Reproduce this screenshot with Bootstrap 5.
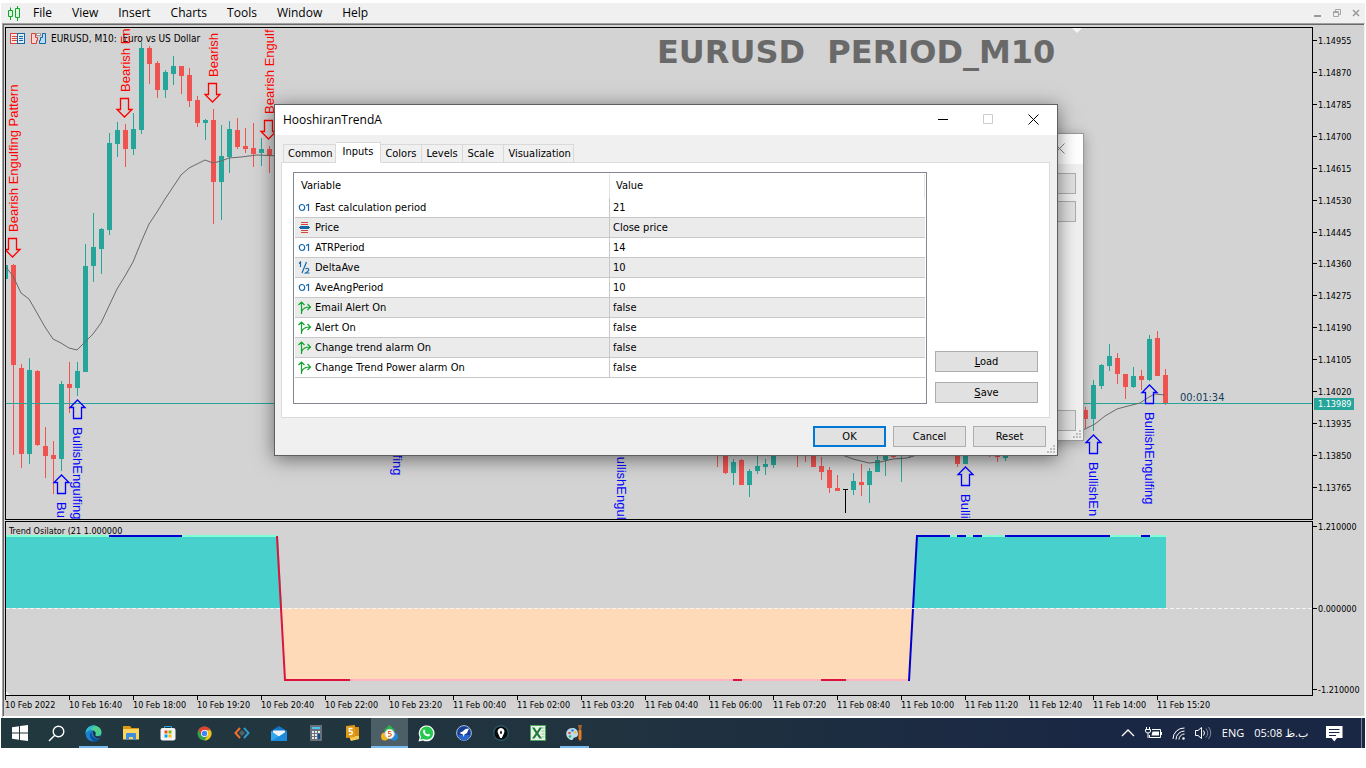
<!DOCTYPE html>
<html lang="en">
<head>
  <meta charset="UTF-8">
  <meta name="viewport" content="width=device-width, initial-scale=1.0">
  <title>EURUSD, M10</title>
  <link rel="stylesheet" href="https://cdn.jsdelivr.net/npm/bootstrap@5.3.0/dist/css/bootstrap.min.css">
  <style>
    body { background: #fff; color: #000; font: 12px/16px "Open Sans", "Noto Sans", sans-serif; padding: 3px 1px 0; }
    svg { display: block; flex: none; }
    button { font: inherit; color: inherit; border: 0; background: none; padding: 0; }

    .menubar { height: 20px; background: #f0f0f0; padding-left: 7px; padding-right: 4px; }
    .menubar .menus { gap: 20px; margin-left: 12px; }
    .wincontrols { gap: 9px; }

    .workspace { background: #d3d3d3; border: solid #a0a0a0; border-width: 1px 0 0 1px; border-right: 1px solid #f0f0f0; border-bottom: 2px solid #fff; margin-left: 1px; }
    .workspace-inner { border: solid #696969; border-width: 1px 0 0 1px; padding: 2px 0 0 1px; }
    .chart-text { font: 9px/12px "DejaVu Sans Condensed", "DejaVu Sans", sans-serif; }
    .chart-title { font-size: 10px; }
    .chart-row { margin-bottom: 1px; }
    .pane { border: 1px solid #000; min-width: 0; overflow: hidden; }
    .pane svg { width: 100%; }
    .price-pane { height: 493px; }
    .osc-pane { height: 175px; }
    .axis { width: 51px; flex: none; }
    .price-axis { padding: 8px 0 26px; }
    .axis-label { padding-left: 5px; position: relative; }
    .axis-label::before { content: ""; position: absolute; left: 0; top: 5px; width: 4px; height: 1px; background: #000; }
    .price-tag { position: absolute; left: 1px; top: 371px; width: 40px; padding-left: 4px; background: #26a69a; color: #fff; }
    .time-axis { height: 20px; }
    .time-axis div { width: 64px; flex: none; position: relative; padding-top: 3px; white-space: nowrap; }
    .time-axis div::before { content: ""; position: absolute; left: 0; top: 0; width: 1px; height: 4px; background: #000; }
    .pattern { font: 13px "Liberation Sans", Arial, sans-serif; }
    .watermark { font: 700 32px "DejaVu Sans", sans-serif; fill: #696969; }
    .countdown { font-size: 11px; fill: #11405e; }

    .win { position: absolute; background: #f0f0f0; font: 11px/14px "DejaVu Sans Condensed", "DejaVu Sans", sans-serif; }
    .win-back { left: 740px; top: 133px; width: 344px; height: 308px; border: 1px solid #999; box-shadow: 0 2px 12px rgba(0,0,0,.3); }
    .win-front { left: 274px; top: 104px; width: 784px; height: 352px; border: 1px solid #5f5f5f; box-shadow: 0 3px 18px rgba(0,0,0,.5); }
    .win-title { height: 30px; background: #fff; font: 12px/16px "Open Sans", "Noto Sans", sans-serif; padding-right: 1px; }
    .win-title button { width: 45px; height: 28px; display: flex; align-items: center; justify-content: center; align-self: flex-start; }
    .btn-win { height: 21px; width: 73px; background: #e1e1e1; border: 1px solid #adadad; }
    .btn-win.wide { width: 103px; }
    .btn-win.default { border: 2px solid #0078d7; }
    .grip { position: absolute; right: 1px; bottom: 1px; }
    .back-top { padding: 9px 7px 0; gap: 7px; }
    .back-bottom { position: absolute; right: 7px; bottom: 9px; }

    .dlg-tabs { margin: 7px 0 0 8px; height: 21px; align-items: flex-end; flex-wrap: nowrap; }
    .dlg-tabs button { height: 19px; min-width: 41px; text-align: left; border: 1px solid #d9d9d9; border-left-width: 0; padding: 0 2px 0 4px; }
    .dlg-tabs .nav-item:first-child button { border-left-width: 1px; }
    .dlg-tabs button.active { height: 21px; background: #fff; border-bottom-color: #fff; padding: 0 7px 2px; }
    .tab-page { background: #fff; border: 1px solid #dcdcdc; height: 256px; margin: -1px 7px 0 6px; padding: 9px 11px 0; }
    .list-frame { border: 1px solid #828790; height: 232px; padding: 1px; }
    .inputs { width: 100%; table-layout: fixed; border-collapse: separate; border-spacing: 0; }
    .inputs th { height: 24px; font-weight: 400; padding: 0 6px; border-right: 1px solid #e5e5e5; }
    .inputs td { height: 20px; padding: 1px 3px 0; border-bottom: 1px solid #c8c8c8; }
    .inputs td:first-child { border-right: 1px solid #c8c8c8; }
    .inputs tbody tr:nth-child(even) td { background: #ebebeb; }
    .inputs col:first-child { width: 50%; }
    .inputs td svg { margin-right: 3px; }
    .side-buttons { gap: 10px; padding-bottom: 14px; }
    .dlg-footer { gap: 7px; padding: 8px 11px 0; }

    .taskbar { height: 30px; background: linear-gradient(90deg, #22383f, #20333f 45%, #1a2744 80%); color: #fff; }
    .taskbar .app { width: 37px; height: 30px; display: flex; align-items: center; justify-content: center; position: relative; }
    .taskbar .app.running::after { content: ""; position: absolute; left: 4px; right: 4px; bottom: 0; height: 2px; background: #76b9ed; }
    .taskbar .app.current { background: #4c5f66; }
    .taskbar .app.current::after { left: 0; right: 0; }
    .tray { gap: 10px; padding-right: 3px; font-size: 11px; }
    .show-desktop { width: 1px; height: 30px; background: #76808f; margin-left: 8px; }
  </style>
</head>
<body>
  <nav class="menubar d-flex align-items-center">
    <svg width="13" height="15" viewBox="0 0 13 15" fill="#dff5df" stroke="#0caa26"><path d="M2.500 1.500v3M2.500 11v3M9.500 0v2M9.500 12v3" /><path d="M.5 4.500h4v6h-4zM7.500 2.500h4v9h-4z" /></svg>
    <div class="menus d-flex flex-grow-1">
      <button type="button">File</button>
      <button type="button">View</button>
      <button type="button">Insert</button>
      <button type="button">Charts</button>
      <button type="button">Tools</button>
      <button type="button">Window</button>
      <button type="button">Help</button>
    </div>
    <div class="wincontrols d-flex">
      <button type="button" aria-label="Minimize"><svg width="10" height="10" stroke="#999" stroke-width="2"><path d="M1 8h7" /></svg></button>
      <button type="button" aria-label="Restore"><svg width="10" height="10" fill="none" stroke="#a5a5a5"><path d="M3.500 3V1.500h5v5H7M1.500 3.500h5v5h-5zM1.500 4.500h5" /></svg></button>
      <button type="button" aria-label="Close"><svg width="10" height="10" stroke="#999" stroke-width="1.500"><path d="M2 2l6 6M8 2l-6 6" /></svg></button>
    </div>
  </nav>

  <main class="workspace">
    <div class="workspace-inner chart-text">
      <div class="chart-row d-flex">
        <div class="pane price-pane flex-grow-1">
          <svg height="491">
            <g transform="translate(-6 -28)">
              <path d="M1072 28h10l-5 5z" fill="#f5f5f5" />
              <text class="watermark" x="657" y="63">EURUSD&nbsp;&nbsp;PERIOD_M10</text>
              <g fill="#fff">
                <rect x="10.500" y="33.500" width="7" height="10" fill="#fde8e4" stroke="#d8433b" />
                <rect x="17.500" y="33.500" width="7" height="10" fill="#dcecfa" stroke="#1767a8" />
                <path d="M12 36.500h5M12 38.500h5M12 40.500h5" stroke="#d8433b" />
                <path d="M19 36.500h4M19 38.500h4M19 40.500h4" stroke="#1767a8" />
                <path d="M31.500 33.500h4v4h2v3h-1v3h-5z" fill="#fbd5cf" stroke="#d8433b" />
                <path d="M42.500 33.500h3v10h-6v-3h1v-3h2z" fill="#b9dcf7" stroke="#1767a8" />
                <rect x="36.500" y="33.500" width="4" height="2" stroke="#999" />
              </g>
              <text class="chart-title" x="51" y="42">EURUSD, M10:&nbsp; Euro vs US Dollar</text>
              <g id="candles" shape-rendering="crispEdges"></g>
              <path d="M6 403.500H1320" stroke="#26a69a" shape-rendering="crispEdges" />
              <g id="average" fill="none" stroke="#696969"></g>
              <g id="patterns" class="pattern"></g>
              <text class="countdown" x="1180" y="401">00:01:34</text>
            </g>
          </svg>
        </div>
        <div class="axis price-axis position-relative d-flex flex-column justify-content-between">
          <div class="axis-label">1.14955</div>
          <div class="axis-label">1.14870</div>
          <div class="axis-label">1.14785</div>
          <div class="axis-label">1.14700</div>
          <div class="axis-label">1.14615</div>
          <div class="axis-label">1.14530</div>
          <div class="axis-label">1.14445</div>
          <div class="axis-label">1.14360</div>
          <div class="axis-label">1.14275</div>
          <div class="axis-label">1.14190</div>
          <div class="axis-label">1.14105</div>
          <div class="axis-label">1.14020</div>
          <div class="axis-label">1.13935</div>
          <div class="axis-label">1.13850</div>
          <div class="axis-label">1.13765</div>
          <div class="price-tag">1.13989</div>
        </div>
      </div>

      <div class="d-flex">
        <div class="pane osc-pane flex-grow-1">
          <svg height="173">
            <g transform="translate(-6 -522)">
              <path d="M6 536H278L282 608H6zM917 536H1166V608H913z" fill="#48d1cc" />
              <path d="M282 608H913L909 680H285z" fill="#ffdab9" />
              <g fill="none" stroke-width="2">
                <path d="M6 536H278M917 536H1166" stroke="#7fffd4" />
                <path d="M285 680H909" stroke="#ffb6c1" />
                <path d="M277 536L285 680H350M733 680H742M821 680H846" stroke="#dc143c" />
                <path d="M109 536H182M909 681L917 536H950M957 536H966M973 536H982M1005 536H1110M1141 536H1150" stroke="#0000cd" />
              </g>
              <path d="M6 608.500H1320" stroke="#f5f5f5" stroke-dasharray="4 2" />
              <path d="M6 691v4h4z" fill="#f5f5f5" />
              <text x="9" y="534">Trend Osilator (21 1.000000</text>
            </g>
          </svg>
        </div>
        <div class="axis d-flex flex-column justify-content-between">
          <div class="axis-label">1.210000</div>
          <div class="axis-label">0.000000</div>
          <div class="axis-label">-1.210000</div>
        </div>
      </div>

      <div id="times" class="time-axis d-flex overflow-hidden"></div>
    </div>
  </main>

  <footer class="taskbar d-flex align-items-center justify-content-between">
    <div class="d-flex">
      <button type="button" class="app" aria-label="Start"><svg width="16" height="16" fill="#fff"><path d="M0 2.300L7 1.200V7.500H0zM8 1L16 0V7.500H8zM0 8.500H7V14.800L0 13.700zM8 8.500H16V16L8 15z" /></svg></button>
      <button type="button" class="app" aria-label="Search"><svg width="17" height="17" fill="none" stroke="#fff" stroke-width="1.400"><circle cx="10.500" cy="6.500" r="5.300" /><path d="M6.800 10.200L1 16" /></svg></button>
      <button type="button" class="app running" aria-label="Edge"><svg width="17" height="17" viewBox="0 0 17 17">
        <circle cx="8.500" cy="8.500" r="8" fill="#1b7fd0" />
        <path d="M.6 8C1 3.500 4.500.5 8.500.5c4.500 0 8 3 8 6.500 0 2.500-1.800 4-4 4-1.500 0-2.500-.5-2-1.500C11 7 9 5 6.500 5 3.500 5 1.500 6.500.6 8z" fill="#4fcf8c" />
        <path d="M.6 8C1 3.500 4.500.5 8.500.5c2 0 3 .6 3 .6C7 1.500 6 3 6.500 5 3.500 5 1.500 6.500.6 8z" fill="#2ab6d8" />
        <path d="M6.500 7c-3 2-1.500 8 3 9.400 2 .2 4.500-.9 5.700-3C11 14.500 6 12 6.500 7z" fill="#0d4f9c" />
        <path d="M8 6c2 0 3.500 2 2.300 3.700-.2 1 1 1.600 2 1.600L16 11l-1 2.300C11 14 7 11 8 6z" fill="#20343f" /></svg></button>
      <button type="button" class="app" aria-label="File Explorer"><svg width="16" height="14" viewBox="0 0 16 14"><path d="M0 0h7l1.500 2H16v2H0z" fill="#d99a10" /><path d="M0 3h16v10.500H0z" fill="#fcd462" /><path d="M3 14V8q0-1 1-1h8q1 0 1 1v6h-3v-3H6v3z" fill="#3b8edb" /></svg></button>
      <button type="button" class="app" aria-label="Store"><svg width="16" height="16" viewBox="0 0 16 16"><path d="M4.500 4V1.500h7V4" fill="none" stroke="#2fa5e0" /><rect x=".5" y="3" width="15" height="12.500" rx="2" fill="#f4f4f4" /><path d="M4.500 5.500h3v3h-3z" fill="#f25022" /><path d="M8.500 5.500h3v3h-3z" fill="#7fba00" /><path d="M4.500 9.500h3v3h-3z" fill="#00a4ef" /><path d="M8.500 9.500h3v3h-3z" fill="#ffb900" /></svg></button>
      <button type="button" class="app" aria-label="Chrome"><svg width="15" height="15" viewBox="0 0 16 16"><circle cx="8" cy="8" r="7.500" fill="#2fa14f" /><path d="M1.500 4.250A7.500 7.500 0 0 1 14.500 4.250L8 4.500 5 10z" fill="#e34133" /><path d="M8 4.500h6.600A7.500 7.500 0 0 1 8 15.500l3.200-5.500z" fill="#fbc116" /><circle cx="8" cy="8" r="3.700" fill="#fff" /><circle cx="8" cy="8" r="2.900" fill="#4285f4" /></svg></button>
      <button type="button" class="app" aria-label="Code"><svg width="16" height="12" viewBox="0 0 16 12" fill="none" stroke-width="2"><path d="M6 1L1.500 6 6 11" stroke="#f0712c" /><path d="M10 1l4.500 5L10 11" stroke="#2e9ac9" /><path d="M8 3L5 6l3 3 3-3z" fill="#53636b" stroke="none" /></svg></button>
      <button type="button" class="app" aria-label="Mail"><svg width="16" height="15" viewBox="0 0 16 15"><path d="M0 5l8-5 8 5v10H0z" fill="#1276c8" /><path d="M2 4.500h12v4L8 12 2 8.500z" fill="#f2f5f8" /><path d="M0 5l8 5.500L16 5v10H0z" fill="#31a7ee" /><path d="M0 15L10 9.200 16 5v10z" fill="#1c8bdd" /></svg></button>
      <button type="button" class="app" aria-label="Calculator"><svg width="12" height="16"><path d="M0 0h12v16H0z" fill="#68717a" /><path d="M2 2h8v2H2z" fill="#4cc3f5" /><path d="M2 6h2v2H2zM5 6h2v2H5zM8 6h2v2H8zM2 9h2v2H2zM5 9h2v2H5zM2 12h2v2H2zM5 12h2v2H5z" fill="#e6e8ea" /><path d="M8 9h2v5H8z" fill="#114a8b" /></svg></button>
      <button type="button" class="app" aria-label="Notes"><svg width="13" height="16" viewBox="0 0 13 16"><path d="M3 2h10v12l-9 1z" fill="#d58d12" /><path d="M3 11h10v3l-8 2z" fill="#f6ca55" /><path d="M0 1l9-1v12l-9 1z" fill="#e09a18" /><path d="M6.500 3.500H3.300v2.700q3-.3 3 1.600T3 9.500" fill="none" stroke="#fff" stroke-width="1.400" /></svg></button>
      <button type="button" class="app running current" aria-label="MetaTrader 5"><svg width="17" height="17" viewBox="0 0 17 17"><path d="M8.500 0l5 4.500v2h-10v-2z" fill="#28b34b" /><ellipse cx="3.800" cy="11.500" rx="3.800" ry="4" fill="#f2b31d" /><ellipse cx="13" cy="11.500" rx="4" ry="4.300" fill="#2387d7" /><circle cx="8.600" cy="9" r="4.700" fill="#fff" stroke="#c8ccd0" /><path d="M10.300 6.500H7.500V8.500q3-.2 2.800 1.400T7 11.300" fill="none" stroke="#e46a1f" stroke-width="1.200" /></svg></button>
      <button type="button" class="app" aria-label="WhatsApp"><svg width="17" height="17" viewBox="0 0 17 17"><path d="M.5 16.500l1.200-4.300A7.900 7.900 0 1 1 5 15.400z" fill="#fff" /><path d="M2.300 14.800l.8-2.900A6.600 6.600 0 1 1 5.400 14z" fill="#25c94e" /><path d="M5.300 5q1-1.200 1.600 0l.5 1.200-.7.900q1 1.800 2.700 2.500l.8-.9 1.900.9q0 1.600-1.700 1.900Q6 11 5 7z" fill="#fff" /></svg></button>
      <button type="button" class="app" aria-label="Browser"><svg width="16" height="16" viewBox="0 0 16 16"><circle cx="8" cy="8" r="7.400" fill="#173f94" stroke="#aebfe0" /><path d="M2.500 10a5.500 5.500 0 0 0 11 0z" fill="#2867cb" /><path d="M13 3.500L11 8l-2.500 1.500L7.500 12 7 9.500 3.500 8l3-1.500L9.500 4z" fill="#fff" /></svg></button>
      <button type="button" class="app" aria-label="Lock"><svg width="16" height="16" viewBox="0 0 16 16"><circle cx="8" cy="8" r="7.300" fill="#07090b" stroke="#275565" stroke-width="1.400" /><path d="M8 3a3.500 3.500 0 0 1 3 5.200L8.800 13H7.200L5 8.200A3.500 3.500 0 0 1 8 3z" fill="#fff" /><path d="M8 5.500l1 1.500-.5 2h-1L7 7z" fill="#07090b" /></svg></button>
      <button type="button" class="app" aria-label="Excel"><svg width="16" height="16" viewBox="0 0 16 16"><path d="M.5.5h15v15H.5z" fill="#e6f1e3" stroke="#49a35c" /><path d="M11.500 3h3M11.500 6h3M11.500 9h3M11.500 12h3" stroke="#8cc69a" /><path d="M2 2.500h2.500L7 6.500l2.500-4H12L8.300 8.200l3.700 5.300H9.300L7 10l-2.500 3.500H2l3.700-5.300z" fill="#207a3b" /></svg></button>
      <button type="button" class="app running" aria-label="Paint"><svg width="17" height="16" viewBox="0 0 17 16"><path d="M6.500 3C2 3 0 6 .3 9.500S4 15 6 15c1.500 0 1-2 2.300-2.400C10 12 12 12 12 9c0-3.500-2-6-5.500-6z" fill="#b9dcef" /><circle cx="3.500" cy="8" r="1.300" fill="#e44a3a" /><circle cx="6.500" cy="5.500" r="1.200" fill="#2b7ad1" /><circle cx="4" cy="11.500" r="1.200" fill="#3fae4c" /><circle cx="9.300" cy="7.500" r="1.200" fill="#f3bb2c" /><path d="M12 0h4l-1 5h-2z" fill="#a4632f" /><path d="M12.500 5h3v9l-1.500 2-1.500-2z" fill="#e87a21" /></svg></button>
    </div>
    <div class="tray d-flex align-items-center">
      <svg width="14" height="8" fill="none" stroke="#fff" stroke-width="1.300"><path d="M1 7l6-6 6 6" /></svg>
      <svg width="17" height="12" viewBox="0 0 17 12" fill="none" stroke="#fff"><path d="M7 2.500h8.500v8H4.500V8M16.500 5v3" /><path d="M7.500 4.500h6.500v4H6.500z" fill="#fff" stroke="none" /><path d="M1.500 0v2M4.500 0v2M.5 2.500h5v1.500q0 2-2.500 2t-2.500-2zM3 6v5" /></svg>
      <svg width="13" height="13" viewBox="0 0 13 13" fill="none" stroke="#fff"><path d="M1 12A11 11 0 0 1 12.500 1M4 12.500A8.500 8.500 0 0 1 12.500 4M7 12.500A5.500 5.500 0 0 1 12.500 7" /><circle cx="11.500" cy="11.500" r="1.200" fill="#fff" stroke="none" /></svg>
      <svg width="17" height="14" viewBox="0 0 17 14" fill="none" stroke="#fff"><path d="M.5 4.500h2.500l3.500-3v11L3 9.500H.5zM8.500 4.500q2 2.500 0 5" /><path d="M11 2.500q3.500 4.500 0 9M13.500 1q4.500 6 0 12" stroke="#7c8799" /></svg>
      <span>ENG</span>
      <span>05:08 ب.ظ</span>
      <svg class="ms-2" width="17" height="17" viewBox="0 0 17 17"><path d="M0 1h16.500v12H11l-2.700 3.500L5.500 13H0z" fill="#fff" /><path d="M3 4.500h10.500M3 7.500h10.500M3 10.500h7" stroke="#1a2744" /></svg>
      <div class="show-desktop"></div>
    </div>
  </footer>

  <section class="win win-back">
    <div class="win-title d-flex justify-content-end"><button type="button" aria-label="Close"><svg width="11" height="11" stroke="#888"><path d="M.5.5l10 10M10.500.5l-10 10" /></svg></button></div>
    <div class="back-top d-flex flex-column align-items-end">
      <button type="button" class="btn-win" aria-label="Properties"></button>
      <button type="button" class="btn-win" aria-label="Delete"></button>
    </div>
    <button type="button" class="btn-win back-bottom" aria-label="Done"></button>
    <svg class="grip" width="9" height="9" fill="#bfbfbf"><path d="M6 0h2v2H6zM3 3h2v2H3zM6 3h2v2H6zM0 6h2v2H0zM3 6h2v2H3zM6 6h2v2H6z" /></svg>
  </section>

  <section class="win win-front" role="dialog" aria-labelledby="dlgTitle">
    <div class="win-title d-flex align-items-center ps-2">
      <span id="dlgTitle" class="flex-grow-1">HooshiranTrendA</span>
      <button type="button" aria-label="Minimize"><svg width="11" height="11" stroke="#000"><path d="M0 5.500h10" /></svg></button>
      <button type="button" aria-label="Maximize" disabled><svg width="11" height="11" fill="none" stroke="#ccc"><path d="M.5.5h9v9h-9z" /></svg></button>
      <button type="button" aria-label="Close"><svg width="11" height="11" stroke="#000"><path d="M.5.5l10 10M10.500.5l-10 10" /></svg></button>
    </div>
    <ul class="nav dlg-tabs" role="tablist">
      <li class="nav-item"><button type="button" role="tab">Common</button></li>
      <li class="nav-item"><button type="button" role="tab" class="active">Inputs</button></li>
      <li class="nav-item"><button type="button" role="tab">Colors</button></li>
      <li class="nav-item"><button type="button" role="tab">Levels</button></li>
      <li class="nav-item"><button type="button" role="tab">Scale</button></li>
      <li class="nav-item"><button type="button" role="tab">Visualization</button></li>
    </ul>
    <div class="tab-page d-flex gap-2">
      <div class="list-frame flex-grow-1">
        <table class="inputs">
          <colgroup><col><col></colgroup>
          <thead><tr><th>Variable</th><th>Value</th></tr></thead>
          <tbody id="inputRows"></tbody>
        </table>
      </div>
      <div class="side-buttons d-flex flex-column justify-content-end">
        <button type="button" class="btn-win wide"><u>L</u>oad</button>
        <button type="button" class="btn-win wide"><u>S</u>ave</button>
      </div>
    </div>
    <div class="dlg-footer d-flex justify-content-end">
      <button type="button" class="btn-win default">OK</button>
      <button type="button" class="btn-win">Cancel</button>
      <button type="button" class="btn-win">Reset</button>
    </div>
    <svg class="grip" width="9" height="9" fill="#bfbfbf"><path d="M6 0h2v2H6zM3 3h2v2H3zM6 3h2v2H6zM0 6h2v2H0zM3 6h2v2H3zM6 6h2v2H6z" /></svg>
  </section>

  <script src="https://cdn.jsdelivr.net/npm/bootstrap@5.3.0/dist/js/bootstrap.bundle.min.js"></script>
  <script>
    // x, wick top, body top, body bottom, wick bottom, colour (g/r/k)
    const candles = [
      [5,265,265,279,279,'g'],[13,264,265,365,455,'r'],[21,364,368,454,468,'r'],[29,358,370,454,464,'g'],
      [37,370,371,445,446,'r'],[45,427,446,456,478,'r'],[53,441,455,459,494,'r'],[61,381,384,459,471,'g'],
      [69,362,384,388,413,'r'],[77,362,371,388,396,'g'],[85,244,266,372,372,'g'],[93,213,247,266,282,'g'],
      [101,228,229,249,274,'g'],[109,133,143,230,235,'g'],[117,122,130,144,157,'g'],[125,124,130,149,167,'r'],
      [133,113,129,149,155,'g'],[141,42,48,130,134,'g'],[149,46,48,64,84,'r'],[157,61,63,90,98,'r'],
      [165,70,72,90,98,'g'],[173,56,66,74,85,'g'],[181,66,66,76,94,'r'],[189,68,75,101,107,'r'],
      [197,96,100,123,127,'r'],[205,119,120,123,140,'g'],[213,109,120,182,224,'r'],[221,125,156,182,220,'g'],
      [229,121,129,157,173,'g'],[237,118,130,147,149,'r'],[245,128,146,149,153,'r'],[253,123,148,154,167,'r'],
      [261,138,149,153,166,'g'],[269,146,149,156,173,'r'],
      [717,440,440,450,467,'r'],[725,440,445,473,474,'r'],[733,459,462,473,485,'g'],[741,459,460,485,485,'r'],
      [749,469,471,485,497,'g'],[757,450,466,471,474,'g'],[765,459,464,467,475,'g'],[773,440,445,465,468,'g'],
      [797,440,440,450,467,'r'],[805,440,440,450,462,'r'],[813,440,445,467,467,'r'],[821,457,466,472,480,'r'],
      [829,467,470,488,493,'r'],[837,475,488,491,491,'r'],[845,489,489,490,513,'k'],[853,473,481,490,495,'g'],
      [861,464,482,485,496,'r'],[869,468,471,485,503,'g'],[877,450,460,472,472,'g'],[885,440,445,460,476,'g'],
      [893,440,445,457,458,'r'],[901,440,440,450,482,'g'],[909,440,445,456,458,'g'],
      [957,440,445,464,467,'r'],[965,440,445,464,464,'g'],[989,440,440,450,457,'r'],[997,440,445,457,462,'r'],
      [1005,440,445,458,461,'g'],[1085,407,410,419,428,'r'],[1093,380,385,419,431,'g'],[1101,364,365,386,389,'g'],
      [1109,344,356,366,371,'g'],[1117,353,358,374,384,'r'],[1125,374,374,387,399,'r'],[1133,367,376,387,388,'g'],
      [1141,370,376,380,390,'r'],[1149,335,339,380,381,'g'],[1157,331,338,376,376,'r'],[1165,369,375,404,405,'r']
    ];
    const colors = { g: '#26a69a', r: '#ef5350', k: '#000' };
    document.getElementById('candles').innerHTML = candles.map(([x, hi, top, bottom, lo, c]) =>
      `<path d="M${x} ${hi}h1V${lo}h-1zM${x - 2} ${top}h5V${bottom}h-5z" fill="${colors[c]}" />`).join('');

    const average = [
      '5,266 13,276 21,293 29,299 37,313 45,327 53,339 61,343 69,348 77,350 85,342 93,334 101,323 109,306 117,289 125,276 133,262 142,240 149,224 157,212 165,199 173,187 181,175 189,168 197,164 205,160 213,163 221,161 229,158 241,157 257,155 280,156',
      '836,452 845,456 853,459 861,461 869,463 880,462 893,459 907,458 920,454',
      '1080,431 1085,429 1095,424 1105,416 1117,409 1128,406 1140,403 1149,397 1155,394 1165,395'
    ];
    document.getElementById('average').innerHTML = average.map(p => `<polyline points="${p}" />`).join('');

    // arrow centre, its upper end, and as much of the label as the pane has room for
    const bearish = [
      [13, 238, 'Bearish Engulfing Pattern'], [125, 98, 'Bearish En'], [213, 83, 'Bearish'], [269, 120, 'Bearish Engulf']
    ];
    const bullish = [
      [77, 400, 'BullishEngulfing'], [61, 475, 'Bu'], [397, 356, 'BullishEngulfing'], [621, 421, 'BullishEngul'],
      [965, 467, 'Bulli'], [1093, 435, 'BullishEn'], [1149, 385, 'BullishEngulfing']
    ];
    document.getElementById('patterns').innerHTML =
      bearish.map(([x, y, label]) => `
        <path d="M${x - 4.5} ${y + .5}h8v11h3.500l-7.500 7.500-7.500-7.500h3.500z" fill="none" stroke="#f00" stroke-width="1.300" />
        <text fill="#f00" transform="translate(${x + 5} ${y - 6}) rotate(-90)">${label}</text>`).join('') +
      bullish.map(([x, y, label]) => `
        <path d="M${x - 3.5} ${y + 18.5}h8v-11h3.500l-7.500-7.500-7.500 7.500h3.500z" fill="none" stroke="#00f" stroke-width="1.300" />
        <text fill="#00f" transform="translate(${x - 4} ${y + 27}) rotate(90)">${label}</text>`).join('');

    const times = ['10 Feb 2022', '10 Feb 16:40', '10 Feb 18:00', '10 Feb 19:20', '10 Feb 20:40', '10 Feb 22:00', '10 Feb 23:20',
      '11 Feb 00:40', '11 Feb 02:00', '11 Feb 03:20', '11 Feb 04:40', '11 Feb 06:00', '11 Feb 07:20', '11 Feb 08:40',
      '11 Feb 10:00', '11 Feb 11:20', '11 Feb 12:40', '11 Feb 14:00', '11 Feb 15:20'];
    document.getElementById('times').innerHTML = times.map(t => `<div>${t}</div>`).join('');

    const icons = {
      int: '<svg width="14" height="14" fill="none" stroke="#1767a8" stroke-width="1.200"><ellipse cx="4" cy="6.500" rx="2.700" ry="3" /><path d="M8 4.500L10.500 3.500v6.500" /></svg>',
      enum: '<svg width="14" height="14" fill="none"><path d="M3 1.500h7M3 3.500h7M3 9.500h7M3 11.500h7" stroke="#d8433b" /><path d="M2 5.500h9M1 6.500h11M2 7.500h9" stroke="#1767a8" /></svg>',
      double: '<svg width="14" height="14" fill="none" stroke="#1767a8" stroke-width="1.200"><path d="M1 2.500L2.500 1v5M8.500 1L4 12M7.500 8q2-1.500 3 0t-3 4h4" /></svg>',
      bool: '<svg width="14" height="14" fill="none" stroke="#12a52e" stroke-width="1.200"><path d="M3.500 13V1M.5 4l3-3 3 3M3.500 11Q5 6 12 6M9.500 3l3 3-3 3" /></svg>'
    };
    const inputs = [
      ['int', 'Fast calculation period', '21'],
      ['enum', 'Price', 'Close price'],
      ['int', 'ATRPeriod', '14'],
      ['double', 'DeltaAve', '10'],
      ['int', 'AveAngPeriod', '10'],
      ['bool', 'Email Alert On', 'false'],
      ['bool', 'Alert On', 'false'],
      ['bool', 'Change trend alarm On', 'false'],
      ['bool', 'Change Trend Power alarm On', 'false']
    ];
    document.getElementById('inputRows').innerHTML = inputs.map(([type, name, value]) =>
      `<tr><td><div class="d-flex align-items-center">${icons[type]}${name}</div></td><td>${value}</td></tr>`).join('');
  </script>
</body>
</html>
